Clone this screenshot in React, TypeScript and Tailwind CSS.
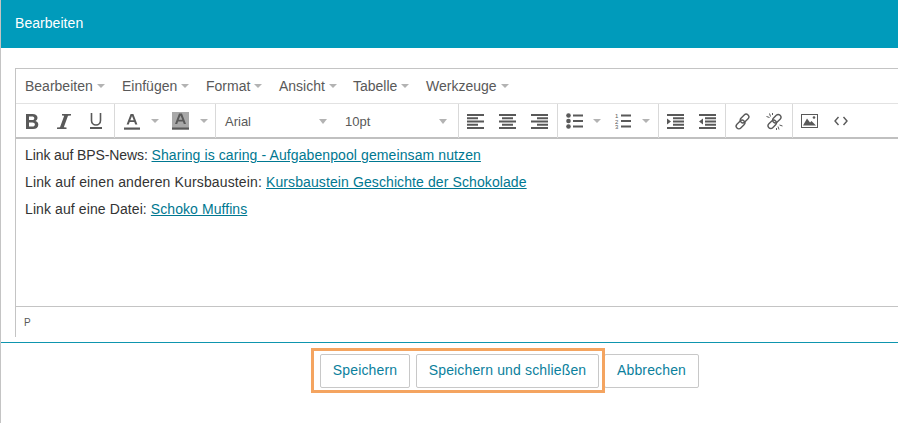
import React from "react";

const F = "font-['Liberation_Sans',Arial,sans-serif]";

function Caret({ className = "" }: { className?: string }) {
  return <span className={"inline-block w-0 h-0 border-x-[4px] border-x-transparent border-t-[4px] border-t-[#b3b3b3] " + className} />;
}

function Lines({ rows }: { rows: [number, number][] }) {
  return (
    <svg width="17" height="15" viewBox="0 0 17 15" fill="#595959">
      {rows.map(([x, w], i) => (
        <rect key={i} x={x} y={i * 3.25} width={w} height="2" />
      ))}
    </svg>
  );
}

function Btn({ children }: { children: React.ReactNode }) {
  return <div className="flex items-center justify-center h-[34px] w-[32px]">{children}</div>;
}

const Sep = () => <div className="w-px h-[34px] bg-[#d9d9d9] shrink-0" />;

const menus: [string, string][] = [
  ["Bearbeiten", "w-[97px]"],
  ["Einfügen", "w-[84px]"],
  ["Format", "w-[73px]"],
  ["Ansicht", "w-[74px]"],
  ["Tabelle", "w-[73px]"],
  ["Werkzeuge", "w-auto"],
];

const linkCls = "text-[#007891] underline";

export default function App() {
  return (
    <div className={"relative w-[898px] h-[423px] overflow-hidden bg-white border-l border-l-[#c4c4c4] " + F}>
      <div className="h-[48px] bg-[#009bbb] flex items-center pl-[14px] pb-[2px] text-[14px] tracking-[0.05px] text-white">Bearbeiten</div>
      <div className="pt-[20px] pl-[14px]">
        <div className="w-[900px] border-l border-t border-[#c4c4c4]">
          <div className="h-[35px] flex items-center pl-[9px] text-[14px] text-[#595959] border-b border-[#e2e2e2]">
            {menus.map(([m, w]) => (
              <div key={m} className={"flex items-center shrink-0 " + w}>
                <span>{m}</span>
                <Caret className="ml-[4px]" />
              </div>
            ))}
          </div>
          <div className="h-[35px] flex items-start border-b-2 border-[#c0c0c0] text-[13px] text-[#595959]">
            <div className="flex w-[98px] h-[34px]">
              <Btn>
                <svg width="14" height="15" viewBox="0 0 14 15" fill="#595959" fillRule="evenodd">
                  <path d="M1 0h6.500c3 0 5 1.300 5 3.800 0 1.500-.8 2.700-2.200 3.200 1.900.4 3 1.800 3 3.700 0 2.800-2.100 4.300-5.300 4.300H1zM4 2.400v3.700h3c1.400 0 2.300-.7 2.300-1.900 0-1.200-.9-1.800-2.300-1.800zM4 8.400v4.200h3.400c1.500 0 2.500-.8 2.500-2.100 0-1.400-1-2.100-2.500-2.100z" />
                </svg>
              </Btn>
              <Btn>
                <svg width="14" height="15" viewBox="0 0 14 15" fill="#595959">
                  <path d="M5 0h9v1.500l-3 .3L6.800 13.200l2.700.3V15H0v-1.500l3-.3L7.200 1.800 5 1.500z" />
                </svg>
              </Btn>
              <Btn>
                <svg width="14" height="16" viewBox="0 0 14 16" fill="none" stroke="#595959" strokeWidth="1.600">
                  <path d="M2.500 0v7.500a4.500 4.500 0 0 0 9 0V0" />
                  <path d="M1 15h12" strokeWidth="2" />
                </svg>
              </Btn>
            </div>
            <Sep />
            <div className="flex items-center w-[100px] h-[34px] pl-[9px]">
              <svg width="16" height="17" viewBox="0 0 16 17" fill="#595959">
                <path d="M6.600 1h2.800l4 10.500h-2.200l-.9-2.500H5.700l-.9 2.500H2.600zM6.300 7.300h3.400L8 2.900z" />
                <rect y="14.500" width="16" height="2.200" />
              </svg>
              <Caret className="ml-[11px]" />
              <svg className="ml-[13px]" width="17" height="18" viewBox="0 0 17 18">
                <rect width="17" height="16" fill="#a8a8a8" />
                <path d="M7 1.500h3l4 10.500h-2.200l-.9-2.500H6.100l-.9 2.500H3zM6.700 7.800h3.600L8.500 3.400z" fill="#595959" />
                <rect y="15.500" width="17" height="2.200" fill="#595959" />
              </svg>
              <Caret className="ml-[11px]" />
            </div>
            <Sep />
            <div className="flex items-center w-[121px] h-[34px] pl-[9px] pr-[10px] pt-[1px] justify-between">
              <span>Arial</span>
              <Caret className="border-x-[4.500px] border-t-[5px]" />
            </div>
            <div className="flex items-center w-[121px] h-[34px] pl-[8px] pr-[11px] pt-[1px] justify-between">
              <span>10pt</span>
              <Caret className="border-x-[4.500px] border-t-[5px]" />
            </div>
            <Sep />
            <div className="flex w-[98px] h-[34px]">
              <Btn><Lines rows={[[0, 17], [0, 11], [0, 17], [0, 11], [0, 17]]} /></Btn>
              <Btn><Lines rows={[[0, 17], [3, 11], [0, 17], [3, 11], [0, 17]]} /></Btn>
              <Btn><Lines rows={[[0, 17], [6, 11], [0, 17], [6, 11], [0, 17]]} /></Btn>
            </div>
            <Sep />
            <div className="flex items-center w-[100px] h-[34px] pl-[8px]">
              <svg width="17" height="16" viewBox="0 0 17 16" fill="#595959">
                <circle cx="2.500" cy="2.500" r="2.300" />
                <circle cx="2.500" cy="8" r="2.300" />
                <circle cx="2.500" cy="13.500" r="2.300" />
                <rect x="7" y="1.500" width="10" height="2" />
                <rect x="7" y="7" width="10" height="2" />
                <rect x="7" y="12.500" width="10" height="2" />
              </svg>
              <Caret className="ml-[10px] border-x-[4.500px]" />
              <svg className="ml-[14px]" width="16" height="16" viewBox="0 0 16 16" fill="#595959">
                <text x="0" y="5" fontSize="6" fontFamily="Liberation Sans">1</text>
                <text x="0" y="10.500" fontSize="6" fontFamily="Liberation Sans">2</text>
                <text x="0" y="16" fontSize="6" fontFamily="Liberation Sans">3</text>
                <rect x="6" y="1.500" width="10" height="2" />
                <rect x="6" y="7" width="10" height="2" />
                <rect x="6" y="12.500" width="10" height="2" />
              </svg>
              <Caret className="ml-[11px] border-x-[4.500px]" />
            </div>
            <Sep />
            <div className="flex w-[66px] h-[34px]">
              <Btn>
                <svg width="17" height="15" viewBox="0 0 17 15" fill="#595959">
                  <rect width="17" height="2" />
                  <rect x="6" y="3.250" width="11" height="2" />
                  <rect x="6" y="6.500" width="11" height="2" />
                  <rect x="6" y="9.750" width="11" height="2" />
                  <rect y="13" width="17" height="2" />
                  <path d="M0 4.500l4 3-4 3z" />
                </svg>
              </Btn>
              <Btn>
                <svg width="17" height="15" viewBox="0 0 17 15" fill="#595959">
                  <rect width="17" height="2" />
                  <rect x="6" y="3.250" width="11" height="2" />
                  <rect x="6" y="6.500" width="11" height="2" />
                  <rect x="6" y="9.750" width="11" height="2" />
                  <rect y="13" width="17" height="2" />
                  <path d="M4 4.500l-4 3 4 3z" />
                </svg>
              </Btn>
            </div>
            <Sep />
            <div className="flex w-[66px] h-[34px]">
              <Btn>
                <svg width="17" height="17" viewBox="0 0 17 17" fill="none" stroke="#595959" strokeWidth="1.400">
                  <rect x="5.500" y="2.800" width="10" height="5.400" rx="2.700" transform="rotate(-45 10.500 5.500)" />
                  <rect x="1.500" y="8.800" width="10" height="5.400" rx="2.700" transform="rotate(-45 6.500 11.500)" />
                </svg>
              </Btn>
              <Btn>
                <svg width="17" height="17" viewBox="0 0 17 17" fill="none" stroke="#595959" strokeWidth="1.400">
                  <rect x="6" y="3" width="9.500" height="5.400" rx="2.700" transform="rotate(-45 10.750 5.700)" />
                  <rect x="1.500" y="8.600" width="9.500" height="5.400" rx="2.700" transform="rotate(-45 6.250 11.300)" />
                  <path d="M0.500 3.500l3 1M3.500 0.500l1 3M6.500 0v2M16.500 13l-3-1M13 16.500l-1-3M10.500 17v-2" strokeWidth="1" />
                </svg>
              </Btn>
            </div>
            <Sep />
            <div className="flex w-[66px] h-[34px]">
              <Btn>
                <svg width="17" height="14" viewBox="0 0 17 14">
                  <rect x=".5" y=".5" width="16" height="13" fill="none" stroke="#595959" />
                  <path d="M2 11.500l4-7 3 4 1.500-1.500 4.500 4.500z" fill="#595959" />
                  <circle cx="13" cy="3.500" r="1.300" fill="#595959" />
                </svg>
              </Btn>
              <Btn>
                <svg width="14" height="10" viewBox="0 0 14 10" fill="none" stroke="#595959" strokeWidth="1.400">
                  <path d="M4.500 1L1 5l3.500 4M9.500 1L13 5 9.500 9" />
                </svg>
              </Btn>
            </div>
          </div>
          <div className="h-[167px] pt-[7px] pl-[9px] text-[14px] leading-[18px] text-[#333333]">
            <p className="mb-[9px]"><span className="tracking-[-0.1px]">Link auf BPS-News: </span><a className={linkCls + " tracking-[0.1px]"}>Sharing is caring - Aufgabenpool gemeinsam nutzen</a></p>
            <p className="mb-[9px]"><span className="tracking-[0.14px]">Link auf einen anderen Kursbaustein: </span><a className={linkCls + " tracking-[0.1px]"}>Kursbaustein Geschichte der Schokolade</a></p>
            <p><span className="tracking-[0.1px]">Link auf eine Datei: </span><a className={linkCls + " tracking-[0.07px]"}>Schoko Muffins</a></p>
          </div>
          <div className="h-[31px] border-t border-[#c4c4c4] flex items-center pl-[8px] text-[10px] text-[#595959]">P</div>
        </div>
      </div>
      <div className="mt-[5px] border-t border-[#0e95ae]" />
      <div className="flex gap-[6px] mt-[11px] pl-[319px] text-[14px] tracking-[0.15px] text-[#0b7f9d]">
        <div className="h-[34px] w-[90px] pb-[2px] flex items-center justify-center bg-white border border-[#c8c8c8] rounded-[2px]">Speichern</div>
        <div className="h-[34px] w-[183px] pb-[2px] flex items-center justify-center bg-white border border-[#c8c8c8] rounded-[2px]">Speichern und schließen</div>
        <div className="h-[34px] w-[95px] -ml-[1px] pb-[2px] flex items-center justify-center bg-white border border-[#c8c8c8] rounded-[2px]">Abbrechen</div>
      </div>
      <div className="absolute left-[310px] top-[348px] w-[294px] h-[45px] border-[3px] border-[#f4a460]" />
    </div>
  );
}
